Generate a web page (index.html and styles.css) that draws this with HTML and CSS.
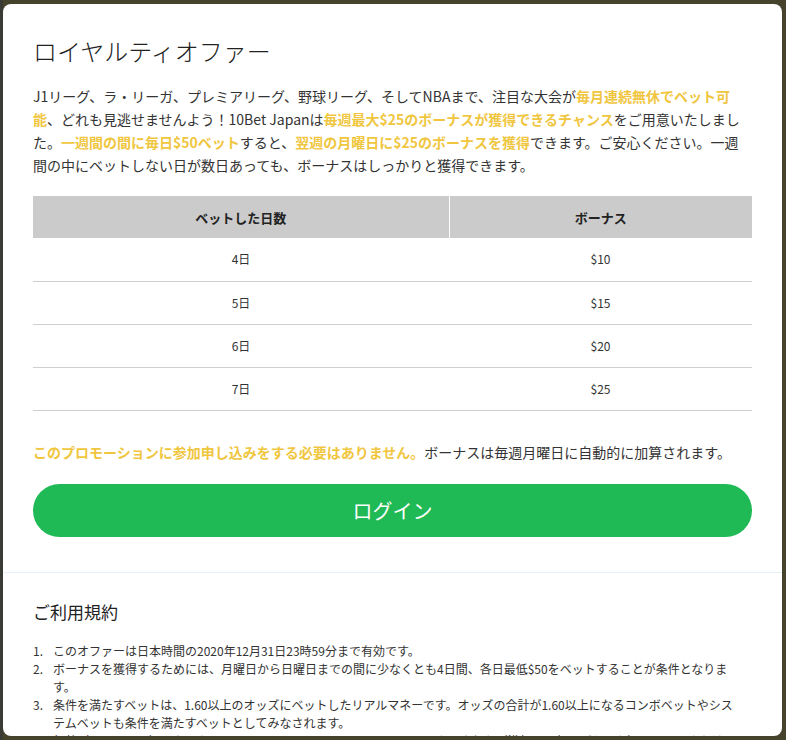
FILE: index.html
```html
<!DOCTYPE html>
<html lang="ja">
<head>
<meta charset="utf-8">
<title>ロイヤルティオファー</title>
<link rel="stylesheet" href="styles.css">
</head>
<body>
<div class="backdrop">
  <div class="modal">
    <section class="offer">
      <h1 class="title">ロイヤルティオファー</h1>
      <p class="intro">J1リーグ、ラ・リーガ、プレミアリーグ、野球リーグ、そしてNBAまで、注目な大会が<strong class="hl">毎月連続無休でベット可能</strong>、どれも見逃せませんよう！10Bet Japanは<strong class="hl">毎週最大$25のボーナスが獲得できるチャンス</strong>をご用意いたしました。<strong class="hl">一週間の間に毎日$50ベット</strong>すると、<strong class="hl">翌週の月曜日に$25のボーナスを獲得</strong>できます。ご安心ください。一週間の中にベットしない日が数日あっても、ボーナスはしっかりと獲得できます。</p>
      <table class="bonus-table">
        <thead>
          <tr><th class="col-days">ベットした日数</th><th>ボーナス</th></tr>
        </thead>
        <tbody>
          <tr><td>4日</td><td>$10</td></tr>
          <tr><td>5日</td><td>$15</td></tr>
          <tr><td>6日</td><td>$20</td></tr>
          <tr><td>7日</td><td>$25</td></tr>
        </tbody>
      </table>
      <p class="note"><strong class="hl">このプロモーションに参加申し込みをする必要はありません。</strong>ボーナスは毎週月曜日に自動的に加算されます。</p>
      <button class="login" type="button">ログイン</button>
    </section>
    <section class="terms">
      <h2 class="terms-title">ご利用規約</h2>
      <ol class="terms-list">
        <li>このオファーは日本時間の2020年12月31日23時59分まで有効です。</li>
        <li>ボーナスを獲得するためには、月曜日から日曜日までの間に少なくとも4日間、各日最低$50をベットすることが条件となります。</li>
        <li>条件を満たすベットは、1.60以上のオッズにベットしたリアルマネーです。オッズの合計が1.60以上になるコンボベットやシステムベットも条件を満たすベットとしてみなされます。</li>
        <li>無効（キャンセル）になったベット、ドローノーベット、キャッシュアウトされた（満額・一部のどちらも）ベット、またはフリーベットは条件を満たすベットとはみなされません。</li>
        <li>ボーナスは毎週月曜日に自動的にアカウントに加算されます。</li>
      </ol>
    </section>
  </div>
</div>
</body>
</html>
```

FILE: styles.css
```css
* {
  box-sizing: border-box;
}

html, body {
  margin: 0;
  padding: 0;
  height: 100%;
}

body {
  background: #46432d;
  font-family: "Noto Sans CJK JP", "Noto Sans", sans-serif;
  color: #333;
  overflow: hidden;
}

.backdrop {
  height: 740px;
  padding: 4px 4px 4px 3px;
  background: linear-gradient(90deg, #3b3b36 0, #3b3b36 3px, #46432d 3px);
}

.modal {
  width: 779px;
  height: 732px;
  background: #fff;
  border-radius: 8px;
  overflow: hidden;
}

.offer {
  padding: 31px 30px 35px 30px;
  border-bottom: 1px solid #e6f0f7;
}

.title {
  margin: 0;
  font-size: 24px;
  line-height: 32px;
  font-weight: 300;
  color: #222;
}

.intro {
  margin: 18px 0 0;
  font-size: 14px;
  line-height: 23px;
  color: #333;
}

.hl {
  color: #f0c63f;
  font-weight: 700;
}

.bonus-table {
  width: 100%;
  margin-top: 19px;
  border-collapse: collapse;
  font-size: 12px;
  color: #333;
}

.bonus-table th {
  background: #cbcbcb;
  height: 42px;
  font-size: 13px;
  font-weight: 700;
  color: #222;
  text-align: center;
  border-left: 1px solid #fff;
  padding: 0;
}

.bonus-table th.col-days {
  width: 416px;
  border-left: none;
}

.bonus-table td {
  height: 43px;
  text-align: center;
  border-bottom: 1px solid #cfcfcf;
  padding: 0;
  line-height: 16px;
}

.note {
  margin: 30px 0 0;
  font-size: 14px;
  line-height: 23px;
  color: #333;
}

.login {
  display: block;
  width: 100%;
  height: 53px;
  margin-top: 20px;
  border: none;
  border-radius: 27px;
  background: #1fb955;
  color: #fff;
  font-family: inherit;
  font-size: 20px;
  line-height: 53px;
  padding: 0;
  cursor: pointer;
}

.terms {
  padding: 27px 30px 0 30px;
}

.terms-title {
  margin: 0;
  font-size: 17px;
  line-height: 24px;
  font-weight: 400;
  color: #222;
}

.terms-list {
  margin: 18px 0 0;
  padding: 0 8px 0 0;
  list-style: none;
  counter-reset: term;
  font-size: 12px;
  line-height: 18px;
  color: #333;
}

.terms-list li {
  display: flex;
  counter-increment: term;
}

.terms-list li::before {
  content: counter(term) ".";
  flex: 0 0 20px;
}
```
